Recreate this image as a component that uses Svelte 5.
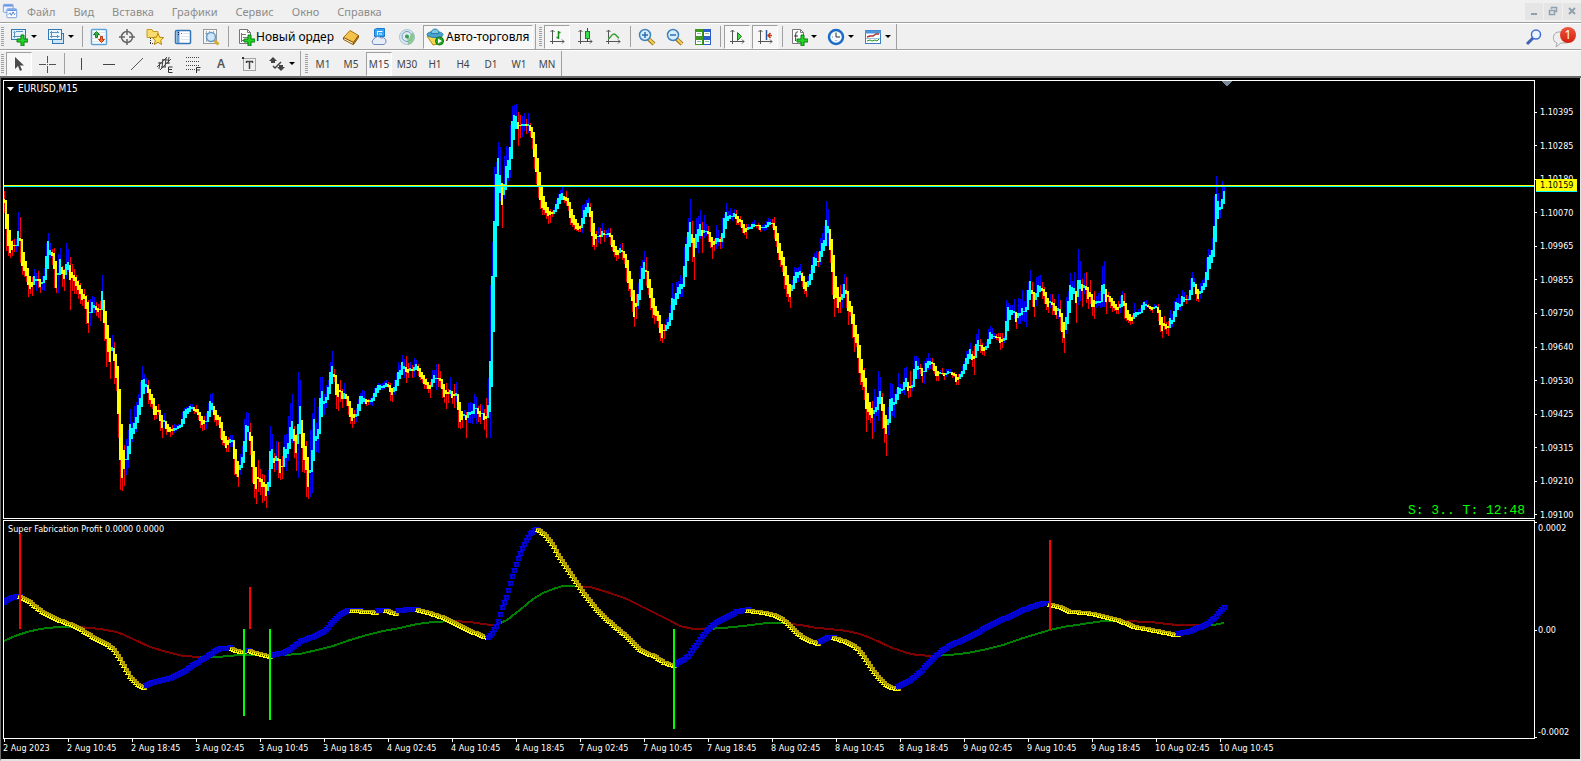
<script>
  const menu = ['Файл', 'Вид', 'Вставка', 'Графики', 'Сервис', 'Окно', 'Справка'];
  const timeframes = ['M1', 'M5', 'M15', 'M30', 'H1', 'H4', 'D1', 'W1', 'MN'];
  const prices = ['1.10395', '1.10285', '1.10180', '1.10070', '1.09965', '1.09855', '1.09750', '1.09640', '1.09530', '1.09425', '1.09315', '1.09210', '1.09100'];
  const levels = ['0.0002', '0.00', '-0.0002'];
  const times = [
    '2 Aug 2023', '2 Aug 10:45', '2 Aug 18:45', '3 Aug 02:45', '3 Aug 10:45', '3 Aug 18:45', '4 Aug 02:45',
    '4 Aug 10:45', '4 Aug 18:45', '7 Aug 02:45', '7 Aug 10:45', '7 Aug 18:45', '8 Aug 02:45', '8 Aug 10:45',
    '8 Aug 18:45', '9 Aug 02:45', '9 Aug 10:45', '9 Aug 18:45', '10 Aug 02:45', '10 Aug 10:45'
  ];

  const plus = '<path d="M11 7h3v4h4v3h-4v4h-3v-4H7v-3h4z" fill="#23d523" stroke="#087a12"/>';
  const axes = '<path d="M4.500 2v14M2 13.500h14M2.500 4l2-2 2 2M14 11.500l2 2-2 2" fill="none" stroke="#555"/>';
  const lens = '<path d="M10.500 11l5.500 5" stroke="#9b7418" stroke-width="4"/><path d="M11 11l5 5" stroke="#f6d25c" stroke-width="2"/><circle cx="7" cy="7" r="5.500" fill="#d5eefb" stroke="#4181bd" stroke-width="1.500"/>';
  const page = '<path d="M2.500 1.500h8l3 3v11h-11z" fill="#fff" stroke="#777"/><path d="M10.500 1.500v3h3" fill="none" stroke="#777"/>';

  const icons = {
    app: '<rect x="1.500" y="1.500" width="11" height="9" rx="1" fill="#eaf3ff" stroke="#6a97e0"/><path d="M2 3h10" stroke="#6a97e0" stroke-width="2"/><rect x="5.500" y="6.500" width="11" height="10" rx="1" fill="#fff" stroke="#6a97e0"/><path d="M6 8h10" stroke="#6a97e0" stroke-width="2"/><path d="M7 13l2-2 1.500 3 2-4 1.500 3 1-1" fill="none" stroke="#3d74d0"/>',
    newChart: '<rect x="1.500" y="1.500" width="14" height="10" fill="#e4f2fc" stroke="#2f79b8"/><path d="M4.500 3v7M3 8.500h10M3.500 4.500h2M6 3.500h7" stroke="#5b93bf" fill="none"/>' + plus,
    profiles: '<rect x="5.500" y="5.500" width="11" height="10" fill="#cfe6f7" stroke="#2f79b8"/><rect x="1.500" y="1.500" width="13" height="10" fill="#eef7fd" stroke="#2f79b8"/><path d="M4.500 3v7M3 8.500h9.500M3 4.500h9M10.500 3v2M10.500 7v3" stroke="#5b93bf" fill="none"/>',
    market: '<rect x="1.500" y="1.500" width="15" height="15" rx="1" fill="#fff" stroke="#5aa3dc" stroke-width="1.500"/><path d="M3 4.500h12M3 7.500h12M3 10.500h12M3 13.500h12" stroke="#e3e3e3"/><path d="M6.500 3.500L9.500 6.500H7.500v3h-2v-3h-2z" fill="#39b54a" stroke="#12801f"/><path d="M11.500 14.500l-3-3h2v-3h2v3h2z" fill="#f2743a" stroke="#c0350a"/>',
    cross: '<circle cx="9" cy="9" r="5.500" fill="none" stroke="#666" stroke-width="1.500"/><path d="M9 1v6M9 11v6M1 9h6M11 9h6" stroke="#666" stroke-width="1.500"/>',
    favorites: '<path d="M1 1.500h5l1 2h5v6H1z" fill="#f8dc6d" stroke="#c49a1c"/><path d="M4.500 10v6M4 15.500h5" stroke="#333" stroke-dasharray="1 1" fill="none"/><path d="M12 5.500l1.700 3.800 4 .3-3 2.800.9 4.100-3.600-2.200-3.600 2.200.9-4.100-3-2.800 4-.3z" fill="#ffe15a" stroke="#b8860b"/>',
    data: '<rect x="1.500" y="2.500" width="15" height="13" rx="1" fill="#fff" stroke="#3274b5" stroke-width="1.500"/><path d="M4 3v12" stroke="#68a3d8" stroke-width="3"/><path d="M4.500 4v1M4.500 6v1" stroke="#102060"/><path d="M7 5.500h1" stroke="#e33" /><path d="M9 5.500h6M7 8.500h8M7 11.500h8" stroke="#dce6ee"/>',
    tester: '<rect x="1.500" y="1.500" width="13" height="14" fill="#f7f7f7" stroke="#999"/><path d="M4.500 3v11M7.500 3v4M11.500 3v4M3 5.500h8" stroke="#9bb0bf"/><path d="M12 12l4.500 4.500" stroke="#d9a92e" stroke-width="3"/><circle cx="9" cy="9" r="4.500" fill="#cfe7fa" stroke="#6c9cc5" stroke-width="1.500"/>',
    order: page + '<path d="M4.500 5v9M4 6.500h5M6 9.500h5M4 12.500h4" stroke="#777" fill="none"/>' + plus,
    book: '<path d="M1.500 9.500L8 2.500l8.500 5-5 7z" fill="#f5c24a" stroke="#a8700f"/><path d="M1.500 9.500v2l9.500 5 .5-2z" fill="#fff2c4" stroke="#8a5a0a"/><path d="M11.500 14.500v2l5-7v-2z" fill="#c68a1d" stroke="#8a5a0a"/>',
    cloud: '<path d="M4.500 1.500l2-1h8v8h-10z" fill="#35a4f4" stroke="#1979cc"/><path d="M7.500 3v4M7.500 3.500h5M9 6h3" stroke="#fff" fill="none"/><path d="M4 16.500a3 3 0 0 1 0-5.500 4 3.500 0 0 1 7-1 3.500 3.500 0 0 1 3 6.500z" fill="#e6edf8" stroke="#6d8cc4"/>',
    signal: '<circle cx="9" cy="9" r="7.500" fill="#dfe9ee" stroke="#a9c4d2"/><circle cx="9" cy="8.500" r="5" fill="none" stroke="#6aa0c9"/><path d="M9 9l1 8a8 8 0 0 0 5-12.500L12 7c0 2 0 4-3 2z" fill="#7fc283" opacity=".8"/><circle cx="9" cy="8.500" r="2" fill="#3c9a55"/>',
    auto: '<path d="M1 8l6 9 5-1 4-8z" fill="#f6d64a" stroke="#b28c19"/><ellipse cx="9" cy="6.500" rx="8" ry="3" fill="#4aa3cf" stroke="#2a7fa9"/><path d="M5 5.500c0-6 8-6 8 0z" fill="#7cc7e6" stroke="#2a7fa9"/><circle cx="13.500" cy="13" r="4" fill="#22a822" stroke="#0c7a10"/><path d="M12 10.500v5l4-2.500z" fill="#fff"/>',
    bars: axes + '<path d="M10.500 3v8M8.500 9.500h2M10.500 4.500h2" stroke="#138a13" fill="none" stroke-width="1.500"/>',
    candles: axes + '<path d="M11.500 0v14" stroke="#0a6a0a"/><rect x="9.500" y="3.500" width="4" height="7" fill="#37dd4b" stroke="#0a8a1a"/>',
    line: axes + '<path d="M4 11c3-1 3-5 6-5 2 0 3 3 5 4" stroke="#37a337" fill="none" stroke-width="1.500"/>',
    zoomIn: lens + '<path d="M4 7h6M7 4v6" stroke="#2c6fb0" stroke-width="1.500"/>',
    zoomOut: lens + '<path d="M4 7h6" stroke="#2c6fb0" stroke-width="1.500"/>',
    tile: '<path d="M1 1h8v8H1zM9 9h8v8H9z" fill="#3c9a20"/><path d="M9 1h8v8H9zM1 9h8v8H1z" fill="#2b5fc9"/><path d="M1 9h8v8H1z" fill="#3c9a20"/><path d="M9 9h8v8H9z" fill="#2b5fc9"/><path d="M2 4h6v4H2zM10 4h6v4h-6zM2 12h6v4H2zM10 12h6v4h-6z" fill="#fff"/><path d="M3 5.500h4M11 5.500h4M3 13.500h4M11 13.500h4" stroke="#8dbb9c"/>',
    scroll: axes + '<path d="M9.500 4.500v8l4-4z" fill="#4bd34b" stroke="#128312"/>',
    shift: axes + '<path d="M10.500 2v10" stroke="#29599e" stroke-width="1.500"/><path d="M16 7.500h-4M14.500 5L12 7.500l2.500 2.500" stroke="#c23a10" fill="none" stroke-width="1.500"/>',
    indicators: page + '<path d="M8 4c-3-1-2 3-2.500 9M4 8h4" stroke="#333" fill="none"/>' + plus,
    clock: '<circle cx="9" cy="9" r="7" fill="#f4faff" stroke="#1c6cc6" stroke-width="2.500"/><path d="M9 4.500V9h4" stroke="#333" fill="none"/><path d="M5 9h1M9 13v-1" stroke="#888"/>',
    template: '<rect x="1.500" y="2.500" width="15" height="13" fill="#fff" stroke="#3b7fc2"/><path d="M1 4h16" stroke="#4e94d8" stroke-width="3"/><path d="M3 9l3-1 3 0 3-2h3" stroke="#a33" fill="none" stroke-width="1.500"/><path d="M3 13l3-1 2 1 3-1 2 1 2-2" stroke="#292" fill="none"/><path d="M2 10.500h14" stroke="#9cc0e0"/>',
    pointer: '<path d="M5 2v12l3-3 2 5 2-1-2-4.500h4z" fill="#4a4a4a"/>',
    crosshair: '<path d="M9.500 1v7M9.500 11v7M1 9.500h7M11 9.500h7" stroke="#555"/><path d="M9 9.500h1" stroke="#555"/>',
    vline: '<path d="M9.500 3v12" stroke="#444"/>',
    hline: '<path d="M3 9.500h12" stroke="#444"/>',
    trend: '<path d="M3 15L15 3" stroke="#555"/>',
    channel: '<path d="M1 12L11 2M4 15L15 4M2 8h4M6 5h6M5 12h5M9 8h5M7 4l-1 9M10 3l-1 9M4 7l-1 7M13 2l-1 7" stroke="#444" fill="none"/><path d="M16.500 12h-4v5.500h4M12.500 14.500h3.500" stroke="#333" fill="none"/>',
    fibo: '<path d="M2 2.500h14M2 6.500h14M2 10.500h14M2 14.500h9" stroke="#444" stroke-dasharray="1 1"/><path d="M16.500 12.500h-4V18M12.500 15h3.500" stroke="#333" fill="none"/>',
    label: '<rect x="3.500" y="3.500" width="12" height="12" fill="none" stroke="#555" stroke-dasharray="1 1"/><path d="M2 2h2v2H2z" fill="#333"/><path d="M6 6.500h7M9.500 6v8M6.500 6v2M12.500 6v2" stroke="#444" stroke-width="1.500"/>',
    shapes: '<path d="M5 2l4 4H7v2H3V6H1zM13 16l-4-4h2v-2h4v2h2z" fill="#444"/><path d="M5 11l2 2 6-6" stroke="#444" stroke-width="1.500" fill="none"/>',
    search: '<path d="M8 10l-6 6" stroke="#3f62b5" stroke-width="3"/><circle cx="11" cy="6.500" r="4.500" fill="#eef5ff" stroke="#3f6fd8" stroke-width="1.500"/>'
  };

  // Bars, two pixels apart, in thirds of a pixel from the block's corner.
  // u: high,top,bottom[,low]   d: [high,]top,bottom,low
  const blocks = [
    { x: 4, y: 160, bars: `d93,117,129,159 d120,207,273 d162,258,288 d210,279,294 d240,243,270,288 d237,255,258,276 u237,255,258,276 u156,213,258,262
      d171,234,243,309 d237,318,345 d276,333,351 d303,348,366 d324,375,411 d348,387,402 d351,366,381,408 u327,348,375 u339,357,363,393 d333,357,363,384
      d357,381,399 u348,366,372,390 u324,348,369,393 u249,288,360 u219,243,327 u249,270,285,294 d267,276,288,315 d264,279,327,384 d303,384,399
      u282,339,345,399 u264,297,345 d318,321,342,381 d327,330,357,393 u249,312,345,357 u267,306,330,336 d291,315,360,450 d312,336,354,393 d327,345,363,402
      d345,351,378,402 d360,363,390,417 d369,375,402,432 d387,420,438 d387,402,417,447 d405,408,447,492 d420,426,489,519 u417,456,460,497 u408,426,459
      u411,435,444,459 d426,438,450,468 d432,444,456,474 d423,447,450,483 u345,393,450 d420,489,543 d453,537,621 d495,576,606 d534,606,657
      u525,561,573,576 d546,564,603,672 d582,654,693 d618,762,834 d687,900,990 d792,954,993 d855,870,927,978 u837,897,900,945 u810,858,900,924
      u747,792,882 u786,804,837,846 u738,789,822 u726,771,807,816 u702,735,789 u666,714,765 u618,660,741 u642,657,702 u654,672,681,699 d660,675,699,732
      d687,720,741 d702,732,747 d714,765,780 d738,765,777 d732,750,756,765 d750,783,813 d765,804,834 u759,780,786,804 d783,807,825 d792,816,816
      d801,816,831 d795,807,813,825 u792,804,813,819 u795,804,810,813 u792,798,807 u792,795,804 u756,777,801 u744,753,792 u741,747,774 u738,744,762
      u732,738,756 u732,741,747,750 d741,753,762 d735,747,756,759 d747,765,780 d756,783,804 d768,795,813 d768,780,792,810 u759,783,786,807 u729,753,786
      u702,723,771 u699,729,750,756 d738,765,786 d750,780,798 d765,780,795 d768,771,804,837 d786,840,855 d813,849,858 d828,864,876 d831,840,855,876
      u825,837,849,861 u825,840,846,861 d840,897,945 d867,942,951 d903,951,981 u882,915,930,945 u858,891,924 u777,843,909 u756,795,876 u759,798,816,840
      d789,816,843,885 d828,921,969 d873,972,1014 d921,987,1032 d900,951,957,996 d927,954,966,1005 d942,957,981,1029 d945,966,981,1023 d972,1008,1044
      u930,966,993,1005 u798,873,981 u822,867,927 d879,894,909,936 u843,888,903,930 d846,894,903,954 d897,939,960 d888,918,921,957 u825,861,921
      u822,867,894,933 u768,849,882,903 u729,801,867 u702,783,837,849 d798,807,843,894 d822,825,879,933 u636,792,852,954 u660,738,822 d780,864,936
      d819,900,939 d843,858,930,1011 d891,981,1017 u810,930,939,1011 u759,870,936,999 u714,777,903 u789,828,843,876 u741,807,837,879 u651,714,822
      u651,693,771 u702,723,732,765 u675,711,729,744 u660,681,720 u606,636,702 u573,618,672 d627,642,651,666 d645,705,747 d672,711,753 d660,690,696,726
      d687,693,717,744 u669,699,717 d702,717,738 d708,738,765 d723,771,792 d744,783,804 d750,762,774,792 u744,762,771,786 u717,732,768 u699,708,753
      u690,708,732 u693,714,726,732 d717,732,738 d717,720,726,735 u714,720,726,735 u708,714,726,738 u684,699,723 u678,684,711 u669,675,699 u672,675,690
      u669,678,684,690 u663,675,684,687 u660,669,681 d666,672,681,684 d669,675,696,723 d684,705,726 u660,681,696,705 u639,660,693 u606,636,678` },
    { x: 400, y: 80, bars: `u855,870,897 u825,846,885 u837,858,867,894 d828,861,876,909 d849,867,879,894 u846,864,873 d855,867,873,894 u834,861,873,891
      u840,852,870 d852,858,873,888 d864,891,900 d876,897,909 d885,912,927 d894,897,915,927 d906,927,939 d906,915,927,954 u870,897,921 u870,885,909
      u852,894,897,930 d852,894,897,921 d873,894,903,924 d897,927,954 d912,951,969 d909,930,942,987 d927,936,942,969 u891,930,942,948 d933,954,972
      d912,942,948,984 u906,939,948,966 d942,990,1044 d966,1026,1047 d993,1020,1044 u990,1002,1008,1014 d996,1005,1020,1074 u969,996,1014,1029
      u966,996,1005,1029 u969,993,1002,1032 u942,972,1002,1014 u951,984,987,1032 d978,984,1002,1026 d972,993,1011,1032 u975,999,1002,1020
      d987,999,1020,1050 d954,1008,1017,1074 u894,975,1014 u615,843,996,1074 u486,588,921 u261,423,756 u246,282,591 u186,234,438 u201,285,339,363
      d309,375,444 u228,312,345,357 u198,258,330 u204,240,294,303 u135,201,270,294 u78,123,237 u75,105,180 u72,108,147 d96,126,147,198 d105,135,138,174
      u108,132,138,171 u99,132,138,153 d117,132,138,162 u99,132,138,159 d129,135,153,171 d141,174,207 d156,231,267 d192,276,312 d234,315,354
      d276,360,387 d318,384,405 d348,390,405 d366,399,417 d381,408,432 d387,393,405,429 d393,396,402,411 u381,390,402 u360,372,396 u342,354,387
      u330,342,372 u321,339,360 d348,360,369 d333,351,363,378 d354,378,393 d366,414,435 d387,429,441 d405,435,450 d417,447,453 d429,450,456
      d435,438,447,456 u375,414,444,459 u372,390,432 u360,381,411 u354,369,399 d369,381,411,456 d393,468,501 d429,495,510 d453,462,477,501
      u441,468,471,489 d444,465,471,492 u429,453,471 d450,459,465,486 u450,462,465,474 u444,459,465,471 d444,459,471,495 d465,501,513 d480,516,531
      d498,525,543 d510,525,537 u492,504,519 d489,510,516,540 d513,534,552 d522,564,606 d540,609,633 d573,627,651 d597,663,696 d630,711,741
      d642,669,681,717 u609,642,678,687 u558,597,660 u540,564,630 u513,546,597 d531,570,576,618 d573,624,645 d597,654,690 d624,684,714 d654,705,732
      d678,708,723 d693,723,744 d705,759,783 d732,774,789 d732,750,753,777 u717,735,753 u711,726,747 u675,699,738 u609,654,720 u642,657,690
      u606,639,675 u603,621,657 u585,612,642,651 u594,612,627,651 u501,558,621 u471,492,591 u414,456,543 u357,426,501 d423,462,489,546 d474,531,600
      u414,462,504 u408,447,486,519 u390,432,468,477 d426,450,468,519 u405,450,459,474 u432,453,456,468 d438,453,462,486 d456,486,504 d471,501,537
      d477,483,495,513 u435,474,492,507 u450,474,486,498 d471,477,486,507 u414,459,486,504 u402,414,474 u369,396,447 u393,408,423 u384,405,417
      u399,408,411,423 u387,399,411 d390,402,417,435 d408,429,435 d408,417,426,441 d420,444,459 d432,459,465 d432,444,456,477 u432,441,450 u438,441,447
      u426,432,447 u420,432,441 d435,438,444 d429,435,438,450 d435,450,456 u435,441,444,450 u432,441,444,453 u423,435,444,450 u414,426,441
      u417,426,435 d417,429,432,444 d411,429,450,477 d438,483,501 d459,519,540` },
    { x: 780, y: 180, bars: `d189,240,261 d213,255,276 d231,288,327 d258,315,351 d285,342,366 d312,351,384 u300,315,333 u261,288,327 u264,276,309
      u261,276,294,306 u252,273,285,294 d276,279,303,321 d288,327,342 d306,333,351 u288,303,321 u270,282,315 u231,255,300 u219,231,279 u213,234,258
      d216,243,246,261 u174,213,246,255 u159,189,231 u138,180,213 u63,120,198 u87,138,159,198 d147,210,249 d177,276,345 d225,357,411 d288,354,384
      d321,384,399 d315,351,366,399 u312,342,360,384 u282,312,354 d291,330,342,384 d333,393,435 d363,396,408 d378,432,474 d402,471,516 d435,489,501
      d462,534,579 d495,579,615 d537,606,630 d564,570,621,660 d594,687,756 d639,696,720 d666,705,729 d663,684,714,777 u627,690,702,756 u651,681,696,708
      u573,651,690,723 u591,633,672 d639,651,693,747 d672,744,789 d705,762,828 u681,717,735,765 u609,657,729 u612,654,693,708 u642,666,675,714
      u627,642,672 u579,621,660 u612,624,642 u612,627,633,639 u564,606,630,645 u561,594,621 d606,633,654 d573,618,624,651 u603,615,624,633 u528,567,621
      u528,543,597 u534,558,570,597 d552,564,567,582 d564,588,609 u543,573,576,612 u534,549,576 u519,543,564,570 u534,543,555,567 d534,546,552,570
      d549,573,582 d558,588,603 d573,588,603 u570,576,582 d564,579,582,585 d579,588,600 u567,579,585,591 u567,573,582 u567,576,579 d576,585,594
      d576,579,588,591 d582,606,615 d582,591,600,615 u576,582,597 u558,573,591 u543,552,582` },
    { x: 966, y: 160, bars: `u573,594,630 u570,582,612 u549,567,597 d573,582,600,621 d558,588,597,645 u522,552,594 u507,540,573 d537,555,558,579
      d549,555,573,585 d561,573,588 u546,558,570 u507,537,564 u498,516,552 u504,522,537 u519,528,531,537 d522,528,534,540 d519,531,534,543
      d519,531,549,570 d519,537,546,564 u528,534,543,549 u420,483,540 u429,441,513 u435,450,480 u435,450,465 u417,453,459,477 d456,486,507
      u414,459,474,492 u417,459,468,492 u390,444,465,483 u423,453,456,486 u390,441,456,501 u366,390,450 u330,363,420 d366,390,402,441 d396,441,471
      u351,399,420,438 u348,375,411 u345,378,396 d366,384,393,417 d381,387,408,432 d396,432,450 d414,441,459 u402,423,429,444 d402,426,435,465
      d417,429,453,465 d438,465,477 u402,444,453,477 d420,447,471,513 d459,516,549 d486,534,579 u411,471,510,522 u393,423,492 u339,375,459 u363,381,420
      u336,384,402 d393,429,489 u267,360,411,435 u303,360,387,423 d357,372,393,441 u339,375,384,402 d336,378,390,429 d381,417,447 d360,396,411,432
      d402,441,468 d393,420,441,477 u408,423,432,444 u399,423,429,438 u393,423,429,444 u318,375,426,441 u303,372,402,441 d387,426,462 d396,405,411,426
      d408,426,444 d414,438,456 d423,444,453 d432,450,462 d423,441,450,462 u408,432,444,459 u393,405,441 d399,423,438,477 d429,474,483 d450,480,489
      d462,483,495 d465,471,483,492 u429,459,477 u456,456,471 u447,456,465 u444,456,462 u429,435,459 u423,426,450 u420,432,438,444 d432,435,441,444
      d438,447,453 d441,450,459 u432,441,447 u435,438,444 d432,441,459,483 d450,495,516 d471,513,534 d468,489,498,510 d486,492,507,522 d483,498,504,528
      u450,474,504 u462,480,492,501 u423,453,486 u414,426,471 u402,429,450 u414,432,441,453 u390,408,438 u396,411,426 d405,417,420,432 u408,417,420,423
      u357,390,420 u336,354,405 u354,366,381 d372,402,423 d387,417,426 u369,393,402,417 u360,378,399 u354,369,390 u294,336,381 u267,291,360
      u270,285,327 u234,270,309 u108,198,291 u48,102,246 u99,123,177 u123,141,150,174 u63,117,147 u78,93,132` }
  ];

  const candles = blocks.flatMap((block) =>
    block.bars.trim().split(/\s+/).map((token, i) => {
      const up = token[0] === 'u';
      let v = token.slice(1).split(',').map(Number);
      if (v.length === 3) v = up ? [...v, v[2]] : [v[0], ...v];
      const [high, top, bottom, low] = v.map((n) => Math.round(n / 3) + block.y);
      return { x: block.x + i * 2, up, high, top, bottom: Math.max(bottom, top + 1), low: Math.max(low, bottom) };
    })
  );

  const parse = (text, dx) => text.trim().split(/\s+/).map((p) => {
    const [x, y] = p.split(',').map(Number);
    return [(x + dx) / 3, y / 3 + 510];
  });

  // Fast line of the indicator: one glyph on every bar.
  const fast = [
    ['blue', 0, '12,275 30,264 50,258 58,258'],
    ['gold', 0, '60,262 75,267 90,277 105,290 130,308 160,324 190,336 220,347 240,357 265,373 290,388 315,401 335,413 350,430 362,450 375,475 390,500 405,517 420,528 432,533'],
    ['blue', 0, '435,525 460,516 480,510 520,500 550,485 580,463 610,445 640,425 660,415 690,412'],
    ['gold', 0, '694,417 715,424 733,427'],
    ['blue', 0, '738,420 746,420'],
    ['gold', 0, '750,424 770,430 790,436 812,440'],
    ['blue', 0, '815,434 845,428 870,416 900,393 925,384 950,374 975,360 1000,332 1020,312 1045,300 1080,300'],
    ['gold', 0, '1058,304 1110,305 1130,311'],
    ['blue', 0, '1135,301 1155,300'],
    ['gold', 0, '1160,303 1175,308 1190,311'],
    ['blue', 0, '1192,301 1230,297 1250,297'],
    ['gold', 1200, '52,300 80,307 120,320 150,332 180,348 210,363 240,375 265,385'],
    ['blue', 1200, '265,380 275,370 290,345 305,295 320,255 335,200 350,155 370,105 390,70 410,55'],
    ['gold', 1200, '412,60 425,67 440,80 460,108 480,145 500,175 520,205 540,235 560,262 590,298 620,328 650,355 680,380 700,400 720,420 740,430 765,440 790,457 810,465 824,467'],
    ['blue', 1200, '826,462 850,448 865,437 880,415 905,380 930,350 950,335 980,320 1010,303 1045,298'],
    ['gold', 1200, '1045,303 1080,307 1110,312 1135,320 1160,338 1180,358 1200,376 1225,392 1255,401'],
    ['blue', 1200, '1257,393 1280,382 1300,380'],
    ['gold', 2490, '10,384 40,393 65,403 85,418 105,445 125,475 145,503 165,523 185,533 203,537'],
    ['blue', 2490, '203,527 230,515 250,503 275,480 300,453 330,425 360,405 400,388 430,373 470,350 500,335 530,322 570,303 600,291 630,281 655,278'],
    ['gold', 2490, '658,283 690,292 720,306 760,308 790,312 830,322 860,329 890,341 920,353 960,359 1000,368 1045,376'],
    ['blue', 2490, '1045,370 1080,362 1110,350 1135,338 1155,320 1170,303 1183,290']
  ];

  const marks = fast.flatMap(([tone, dx, text]) => {
    const points = parse(text, dx);
    const result = [];
    let k = 0;
    const end = points[points.length - 1][0];
    for (let x = Math.round(points[0][0] / 2) * 2; x <= end + 1; x += 2) {
      while (k < points.length - 2 && x > points[k + 1][0]) k++;
      const [x0, y0] = points[k];
      const [x1, y1] = points[k + 1];
      const t = Math.min(1, Math.max(0, (x - x0) / (x1 - x0)));
      result.push({ tone, x, y: Math.round(y0 + (y1 - y0) * t) });
    }
    return result;
  });

  const slow = [
    ['#008000', 0, '12,393 45,378 80,365 120,357 170,352 240,350'],
    ['#800000', 0, '240,350 300,356 350,366 400,388 450,410 500,427 550,438 600,440'],
    ['#008000', 0, '600,440 650,440 720,436 850,436 900,431 950,421 1000,408 1050,390 1100,376 1150,364 1200,354 1250,343 1300,337 1360,334'],
    ['#800000', 1200, '160,334 210,337 270,345 288,345'],
    ['#008000', 1200, '288,344 320,330 360,300 400,268 430,248 460,236 490,228 525,228'],
    ['#800000', 1200, '525,228 570,232 620,245 680,268 740,298 800,328 840,348 880,356 925,357'],
    ['#008000', 1200, '925,357 970,354 1030,347 1100,340 1155,338'],
    ['#800000', 1200, '1155,338 1200,346 1250,353 1290,357 1340,363 1380,373 1420,388 1470,412 1520,430 1550,436 1600,438'],
    ['#008000', 2490, '310,438 360,435 410,430 460,420 520,405 580,385 630,370 660,360 700,350 760,341 820,334 880,332'],
    ['#800000', 2490, '880,332 960,335 1040,344 1115,346'],
    ['#008000', 2490, '1115,346 1150,344 1183,338']
  ].map(([color, dx, text]) => ({ color, points: parse(text, dx).map((p) => p.map(Math.round).join(',')).join(' ') }));

  const signals = [
    { x: 19, y: 533, h: 96, color: '#ff0000' },
    { x: 249, y: 587, h: 42, color: '#ff0000' },
    { x: 243, y: 629, h: 87, color: '#00ff00' },
    { x: 269, y: 629, h: 91, color: '#00ff00' },
    { x: 673, y: 629, h: 100, color: '#00ff00' },
    { x: 1049, y: 540, h: 90, color: '#ff0000' }
  ];
</script>

{#snippet icon(name)}
  <svg class="icon" width="18" height="18" viewBox="0 0 18 18" aria-hidden="true">{@html icons[name]}</svg>
{/snippet}

{#snippet tool(name, label, pressed = false)}
  <button class="tool" class:pressed aria-label={label}>{@render icon(name)}</button>
{/snippet}

{#snippet split(name, label)}
  <button class="split" aria-label={label}>{@render icon(name)}<i class="caret"></i></button>
{/snippet}

<div class="terminal">
  <header class="menubar">
    {@render icon('app')}
    <nav>
      {#each menu as item}
        <button class="menu-item">{item}</button>
      {/each}
    </nav>
    <div class="window-buttons">
      <button aria-label="Minimize"><svg width="10" height="10"><path d="M2 8h6" stroke="#8fa0af" stroke-width="2" /></svg></button>
      <button aria-label="Restore">
        <svg width="10" height="10"><path d="M3.500 3V1.500h5v4H7M1.500 4.500h5v4h-5zM3 1.500h6M1 4.500h6" fill="none" stroke="#8fa0af" stroke-width="1.500" /></svg>
      </button>
      <button aria-label="Close"><svg width="10" height="10"><path d="M2 2l6 6M8 2l-6 6" stroke="#8fa0af" stroke-width="2" /></svg></button>
    </div>
  </header>

  <div class="toolbar">
    <div class="band">
      <i class="grip"></i>
      {@render split('newChart', 'New chart')}
      {@render split('profiles', 'Profiles')}
      <i class="sep"></i>
      {@render tool('market', 'Market watch')}
      {@render tool('cross', 'Data window')}
      {@render tool('favorites', 'Navigator')}
      {@render tool('data', 'Terminal')}
      {@render tool('tester', 'Strategy tester')}
      <i class="sep"></i>
      <button class="order">{@render icon('order')}Новый ордер</button>
      {@render tool('book', 'Editor')}
      {@render tool('cloud', 'Cloud')}
      {@render tool('signal', 'Signals')}
      <button class="auto pressed">{@render icon('auto')}Авто-торговля</button>
    </div>
    <div class="band">
      <i class="grip"></i>
      {@render tool('bars', 'Bar chart', true)}
      {@render tool('candles', 'Candlesticks')}
      {@render tool('line', 'Line chart')}
      <i class="sep"></i>
      {@render tool('zoomIn', 'Zoom in')}
      {@render tool('zoomOut', 'Zoom out')}
      {@render tool('tile', 'Tile windows')}
      <i class="sep"></i>
      {@render tool('scroll', 'Auto scroll', true)}
      {@render tool('shift', 'Chart shift', true)}
      <i class="sep"></i>
      {@render split('indicators', 'Indicators')}
      {@render split('clock', 'Periods')}
      {@render split('template', 'Templates')}
    </div>
    <div class="alerts">
      {@render tool('search', 'Search')}
      <button class="news" aria-label="Notifications">
        <svg width="20" height="18" viewBox="0 0 20 18"><path d="M6 2h9c5 0 5 11-1 11H9l-5 4 1-4C0 12 0 3 6 2z" fill="#eee" stroke="#aaa" /></svg>
        <span class="badge">1</span>
      </button>
    </div>
  </div>

  <div class="toolbar drawing">
    <div class="band">
      <i class="grip"></i>
      {@render tool('pointer', 'Cursor', true)}
      {@render tool('crosshair', 'Crosshair')}
      <i class="sep"></i>
      {@render tool('vline', 'Vertical line')}
      {@render tool('hline', 'Horizontal line')}
      {@render tool('trend', 'Trendline')}
      {@render tool('channel', 'Channel')}
      {@render tool('fibo', 'Fibonacci')}
      <button class="tool letter">A</button>
      {@render tool('label', 'Text label')}
      {@render split('shapes', 'Arrows')}
    </div>
    <div class="band">
      <i class="grip"></i>
      {#each timeframes as frame}
        <button class="tool frame" class:pressed={frame === 'M15'}>{frame}</button>
      {/each}
    </div>
  </div>

  <main class="workspace">
    <section class="row price-row">
      <div class="pane">
        <svg class="plot" width="100%" height="100%" shape-rendering="crispEdges">
          <g transform="translate(-4 -81)">
            {#each candles as c}
              <rect x={c.x} y={c.high} width="1" height={c.low - c.high} fill={c.up ? '#0000ff' : '#ff0000'} />
            {/each}
            {#each candles as c}
              <rect x={c.x - 1} y={c.top} width="2" height={c.bottom - c.top} fill={c.up ? '#00ffff' : '#ffff00'} />
            {/each}
            <path d="M1221 81h11l-5 5z" fill="#778899" />
          </g>
          <rect y="104" width="100%" height="1" fill="#ffff00" />
          <rect y="105" width="100%" height="1" fill="#00ffff" />
        </svg>
        <h1 class="symbol"><svg width="7" height="4"><path d="M0 0h7L3.500 4z" fill="#fff" /></svg>EURUSD,M15</h1>
        <p class="countdown">S: 3.. T: 12:48</p>
      </div>
      <div class="axis prices">
        {#each prices as price}
          <span>{price}</span>
        {/each}
        <b class="current">1.10159</b>
      </div>
    </section>

    <section class="row indicator-row">
      <div class="pane">
        <svg class="plot" width="100%" height="100%" shape-rendering="crispEdges">
          <g transform="translate(-4 -521)">
            {#each slow as s}
              <polyline points={s.points} fill="none" stroke={s.color} stroke-width="2" />
            {/each}
            {#each marks as m}
              {#if m.tone === 'blue'}
                <path d="M{m.x - 2} {m.y - 1}h5v4h-5z" fill="#0000c8" />
                <path d="M{m.x - 3} {m.y - 2}h6v1h-6zM{m.x - 1} {m.y - 1}h1v4h-1z" fill="#0000ff" />
                <path d="M{m.x} {m.y}h2v1h-2z" fill="#000050" />
              {:else}
                <path d="M{m.x - 2} {m.y - 2}h5v4h-5z" fill="#b4a000" />
                <path d="M{m.x - 1} {m.y}h1v1h-1z" fill="#282800" />
                <path d="M{m.x - 3} {m.y + 1}h5v1h-5zM{m.x - 2} {m.y - 1}h1v2h-1z" fill="#ffff00" />
              {/if}
            {/each}
            {#each signals as s}
              <rect x={s.x} y={s.y} width="2" height={s.h} fill={s.color} />
            {/each}
          </g>
        </svg>
        <h2 class="indicator-title">Super Fabrication Profit 0.0000 0.0000</h2>
      </div>
      <div class="axis levels">
        <div class="ticks"><i></i><i></i><i></i></div>
        <div class="level-labels">
          {#each levels as level}
            <span>{level}</span>
          {/each}
        </div>
      </div>
    </section>

    <footer class="times">
      {#each times as time}
        <span>{time}</span>
      {/each}
    </footer>
  </main>
</div>

<style>
  :global(body) {
    background: #f0f0f0;
  }

  .terminal {
    display: flex;
    flex-direction: column;
    height: 100vh;
    min-height: 500px;
    overflow: hidden;
    font: 12px/16px "Noto Sans", "Open Sans", sans-serif;
    color: #000;
  }

  button {
    display: flex;
    align-items: center;
    justify-content: center;
    flex: none;
    box-sizing: border-box;
    margin: 0;
    padding: 0;
    border: 0;
    background: none;
    font: inherit;
    color: inherit;
    white-space: nowrap;
  }

  .icon {
    flex: none;
  }

  .menubar {
    display: flex;
    align-items: center;
    height: 22px;
    padding-left: 2px;
    border-bottom: 1px solid #a0a0a0;
  }

  .menubar nav {
    display: flex;
    flex: 1;
  }

  .menu-item {
    padding: 2px 9px 0;
    height: 22px;
    color: #8c8c8c;
    font-size: 11px;
  }

  .menubar > .icon {
    width: 16px;
  }

  .window-buttons {
    display: flex;
    gap: 1px;
  }

  .window-buttons button {
    width: 18px;
    height: 17px;
    background: #e5e5e5;
  }

  .toolbar {
    display: flex;
    height: 25px;
    border-top: 1px solid #fff;
    border-bottom: 1px solid #a0a0a0;
  }

  .drawing {
    border-bottom: 2px solid #696969;
  }

  .band {
    display: flex;
    align-items: center;
    border-right: 1px solid #a0a0a0;
    padding-left: 3px;
  }

  .band:first-child {
    padding-left: 1px;
  }

  .drawing .band:last-child {
    padding-left: 4px;
  }

  .grip {
    width: 3px;
    height: 20px;
    margin-right: 1px;
    background: repeating-linear-gradient(#a0a0a0 0 1px, #f0f0f0 1px 2px);
  }

  .sep {
    width: 1px;
    height: 21px;
    margin: 0 2px 0 3px;
    background: #a0a0a0;
  }

  .tool {
    width: 26px;
    height: 24px;
    margin: 0 1px;
  }

  .split {
    padding: 0 4px 0 5px;
    height: 24px;
    gap: 3px;
  }

  .caret {
    border: solid transparent;
    border-width: 3px 3px 0;
    border-top-color: #000;
    width: 0;
    margin-right: 1px;
  }

  .pressed {
    border: 1px solid;
    border-color: #a0a0a0 #fff #fff #a0a0a0;
    background: #f7f7f7;
  }

  .order {
    gap: 1px;
    width: 106px;
    justify-content: flex-start;
    padding-left: 6px;
  }

  .auto {
    width: 110px;
    height: 24px;
    gap: 2px;
    margin: 0 2px;
    padding-left: 2px;
    justify-content: flex-start;
  }

  .frame {
    font-size: 10px;
    color: #444;
  }

  .letter {
    font-size: 12px;
    font-weight: 600;
    color: #555;
  }

  .alerts {
    display: flex;
    align-items: center;
    margin-left: auto;
    padding-right: 5px;
  }

  .news {
    position: relative;
    width: 28px;
    height: 24px;
    padding-top: 4px;
  }

  .badge {
    position: absolute;
    top: 2px;
    right: 0;
    width: 16px;
    height: 16px;
    border-radius: 50%;
    background: linear-gradient(#ee5540, #d41f0c);
    color: #fff;
  }

  .workspace {
    display: flex;
    flex: 1;
    flex-direction: column;
    min-height: 0;
    padding: 2px 0 0 2px;
    background: #000;
    border-left: 1px solid #696969;
    border-right: 1px solid #e3e3e3;
    border-bottom: 2px solid #e3e3e3;
    color: #fff;
    font: 9px/12px "DejaVu Sans Condensed", "Noto Sans", sans-serif;
  }

  .row {
    display: grid;
    grid-template-columns: minmax(0, 1fr) 45px;
    grid-template-rows: 100%;
    min-height: 0;
  }

  .price-row {
    flex: 439 1 0;
  }

  .indicator-row {
    flex: 219 1 0;
    margin-top: 1px;
  }

  .pane {
    position: relative;
    border: 1px solid #fff;
    overflow: hidden;
  }

  .plot {
    display: block;
  }

  .symbol,
  .indicator-title {
    position: absolute;
    top: 2px;
    left: 4px;
    display: flex;
    align-items: center;
    gap: 4px;
    margin: 0;
    font: inherit;
  }

  .symbol {
    left: 3px;
    font-size: 10px;
  }

  .countdown {
    position: absolute;
    right: 9px;
    bottom: -1px;
    margin: 0;
    color: #00ff00;
    font: 13px/16px "Liberation Mono", monospace;
  }

  .axis {
    position: relative;
    display: flex;
  }

  .prices {
    flex-direction: column;
    justify-content: space-between;
    padding-top: 26px;
    margin-bottom: -2px;
  }

  .prices span {
    display: flex;
    align-items: center;
    gap: 3px;
  }

  .prices span::before {
    content: '';
    width: 2px;
    height: 1px;
    background: #fff;
  }

  .current {
    position: absolute;
    top: 99px;
    left: 1px;
    right: 3px;
    padding-left: 4px;
    background: #ffff00;
    border-bottom: 1px solid #00ffff;
    color: #000;
    font-weight: normal;
  }

  .ticks,
  .level-labels {
    display: flex;
    flex-direction: column;
    justify-content: space-between;
  }

  .ticks {
    padding: 2px 0 1px;
  }

  .ticks i {
    width: 2px;
    height: 1px;
    background: #fff;
  }

  .level-labels {
    padding: 2px 0 1px 1px;
  }

  .times {
    display: flex;
    height: 20px;
    overflow: hidden;
  }

  .times span {
    position: relative;
    flex: 0 0 64px;
    padding-top: 3px;
    white-space: nowrap;
  }

  .times span::before {
    content: '';
    position: absolute;
    top: 0;
    left: 1px;
    width: 1px;
    height: 3px;
    background: #fff;
  }
</style>
